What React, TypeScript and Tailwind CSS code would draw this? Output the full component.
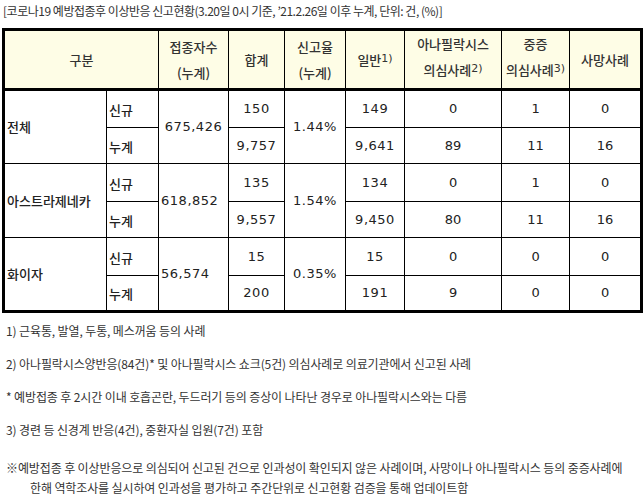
const ko = "font-['Noto_Sans_CJK_KR',sans-serif]";
const num = "font-['DejaVu_Sans','Noto_Sans_CJK_KR',sans-serif]";

type Group = {
  name: string;
  total: string;
  totalAlign: "center" | "left";
  rate: string;
  rows: { kind: string; sum: string; general: string; ana: string; severe: string; death: string }[];
};

const groups: Group[] = [
  {
    name: "전체",
    total: "675,426",
    totalAlign: "center",
    rate: "1.44%",
    rows: [
      { kind: "신규", sum: "150", general: "149", ana: "0", severe: "1", death: "0" },
      { kind: "누계", sum: "9,757", general: "9,641", ana: "89", severe: "11", death: "16" },
    ],
  },
  {
    name: "아스트라제네카",
    total: "618,852",
    totalAlign: "left",
    rate: "1.54%",
    rows: [
      { kind: "신규", sum: "135", general: "134", ana: "0", severe: "1", death: "0" },
      { kind: "누계", sum: "9,557", general: "9,450", ana: "80", severe: "11", death: "16" },
    ],
  },
  {
    name: "화이자",
    total: "56,574",
    totalAlign: "left",
    rate: "0.35%",
    rows: [
      { kind: "신규", sum: "15", general: "15", ana: "0", severe: "0", death: "0" },
      { kind: "누계", sum: "200", general: "191", ana: "9", severe: "0", death: "0" },
    ],
  },
];

const notes = [
  "1) 근육통, 발열, 두통, 메스꺼움 등의 사례",
  "2) 아나필락시스양반응(84건)* 및 아나필락시스 쇼크(5건) 의심사례로 의료기관에서 신고된 사례",
  "* 예방접종 후 2시간 이내 호흡곤란, 두드러기 등의 증상이 나타난 경우로 아나필락시스와는 다름",
  "3) 경련 등 신경계 반응(4건), 중환자실 입원(7건) 포함",
];

function Sup({ children }: { children: string }) {
  return <sup className={`${num} text-[11px] relative -top-[3px]`}>{children}</sup>;
}

export default function App() {
  const th = `border border-black bg-[#fefde6] text-center align-middle text-[13px] font-medium leading-[26px] text-[#333] ${ko}`;
  const td = `border border-black align-middle text-[13px] text-[#222] ${num}`;
  return (
    <div className="h-[501px] w-[643px] overflow-hidden bg-white">
      <p className={`pl-[3px] pt-[3px] text-[12px] leading-[16px] tracking-[-0.04em] text-[#333] ${ko}`}>
        [코로나19 예방접종후 이상반응 신고현황(3.20일 0시 기준, ’21.2.26일 이후 누계, 단위: 건, (%)]
      </p>
      <table className="ml-[2px] mt-[9px] w-[638px] table-fixed border-collapse border-[3px] border-black">
        <colgroup>
          <col className="w-[103px]" />
          <col className="w-[52px]" />
          <col className="w-[70px]" />
          <col className="w-[56px]" />
          <col className="w-[61px]" />
          <col className="w-[59px]" />
          <col className="w-[97px]" />
          <col className="w-[68px]" />
          <col className="w-[72px]" />
        </colgroup>
        <thead>
          <tr className="h-[52px] border-b-[3px] border-black">
            <th colSpan={2} className={th}>구분</th>
            <th className={th}>
              접종자수
              <br />
              (누계)
            </th>
            <th className={th}>합계</th>
            <th className={th}>
              신고율
              <br />
              (누계)
            </th>
            <th className={th}>
              일반<Sup>1)</Sup>
            </th>
            <th className={`${th} pb-[5px] leading-[21px]`}>
              아나필락시스
              <br />
              의심사례<Sup>2)</Sup>
            </th>
            <th className={`${th} pb-[5px] leading-[21px]`}>
              중증
              <br />
              <span className="-mx-1 whitespace-nowrap">
                의심사례<Sup>3)</Sup>
              </span>
            </th>
            <th className={th}>사망사례</th>
          </tr>
        </thead>
        <tbody>
          {groups.map((g) =>
            g.rows.map((r, i) => (
              <tr key={g.name + r.kind} className={i === 0 ? "h-[38px]" : "h-[36px]"}>
                {i === 0 && (
                  <td rowSpan={2} className={`${td} pl-[2px] font-medium ${ko}`}>
                    {g.name}
                  </td>
                )}
                <td className={`${td} pl-[2px] pt-[2px] font-medium ${ko}`}>{r.kind}</td>
                {i === 0 && (
                  <td
                    rowSpan={2}
                    className={`${td} ${g.totalAlign === "center" ? "text-center" : "pl-[2px] text-left"} tracking-[0.04em]`}
                  >
                    {g.total}
                  </td>
                )}
                <td className={`${td} text-center tracking-[0.04em]`}>{r.sum}</td>
                {i === 0 && (
                  <td rowSpan={2} className={`${td} text-center tracking-[0.04em]`}>
                    {g.rate}
                  </td>
                )}
                <td className={`${td} text-center tracking-[0.04em]`}>{r.general}</td>
                <td className={`${td} text-center`}>{r.ana}</td>
                <td className={`${td} text-center`}>{r.severe}</td>
                <td className={`${td} text-center`}>{r.death}</td>
              </tr>
            ))
          )}
        </tbody>
      </table>
      <div className={`mt-[10px] pl-[6px] text-[12px] leading-[16px] tracking-[-0.01em] text-[#333] ${ko}`}>
        {notes.map((n) => (
          <p key={n} className="mb-[17px]">
            {n}
          </p>
        ))}
        <div className="mt-[20px] leading-[20px]">
          <p>※예방접종 후 이상반응으로 의심되어 신고된 건으로 인과성이 확인되지 않은 사례이며, 사망이나 아나필락시스 등의 중증사례에</p>
          <p className="pl-[24px]">한해 역학조사를 실시하여 인과성을 평가하고 주간단위로 신고현황 검증을 통해 업데이트함</p>
        </div>
      </div>
    </div>
  );
}
